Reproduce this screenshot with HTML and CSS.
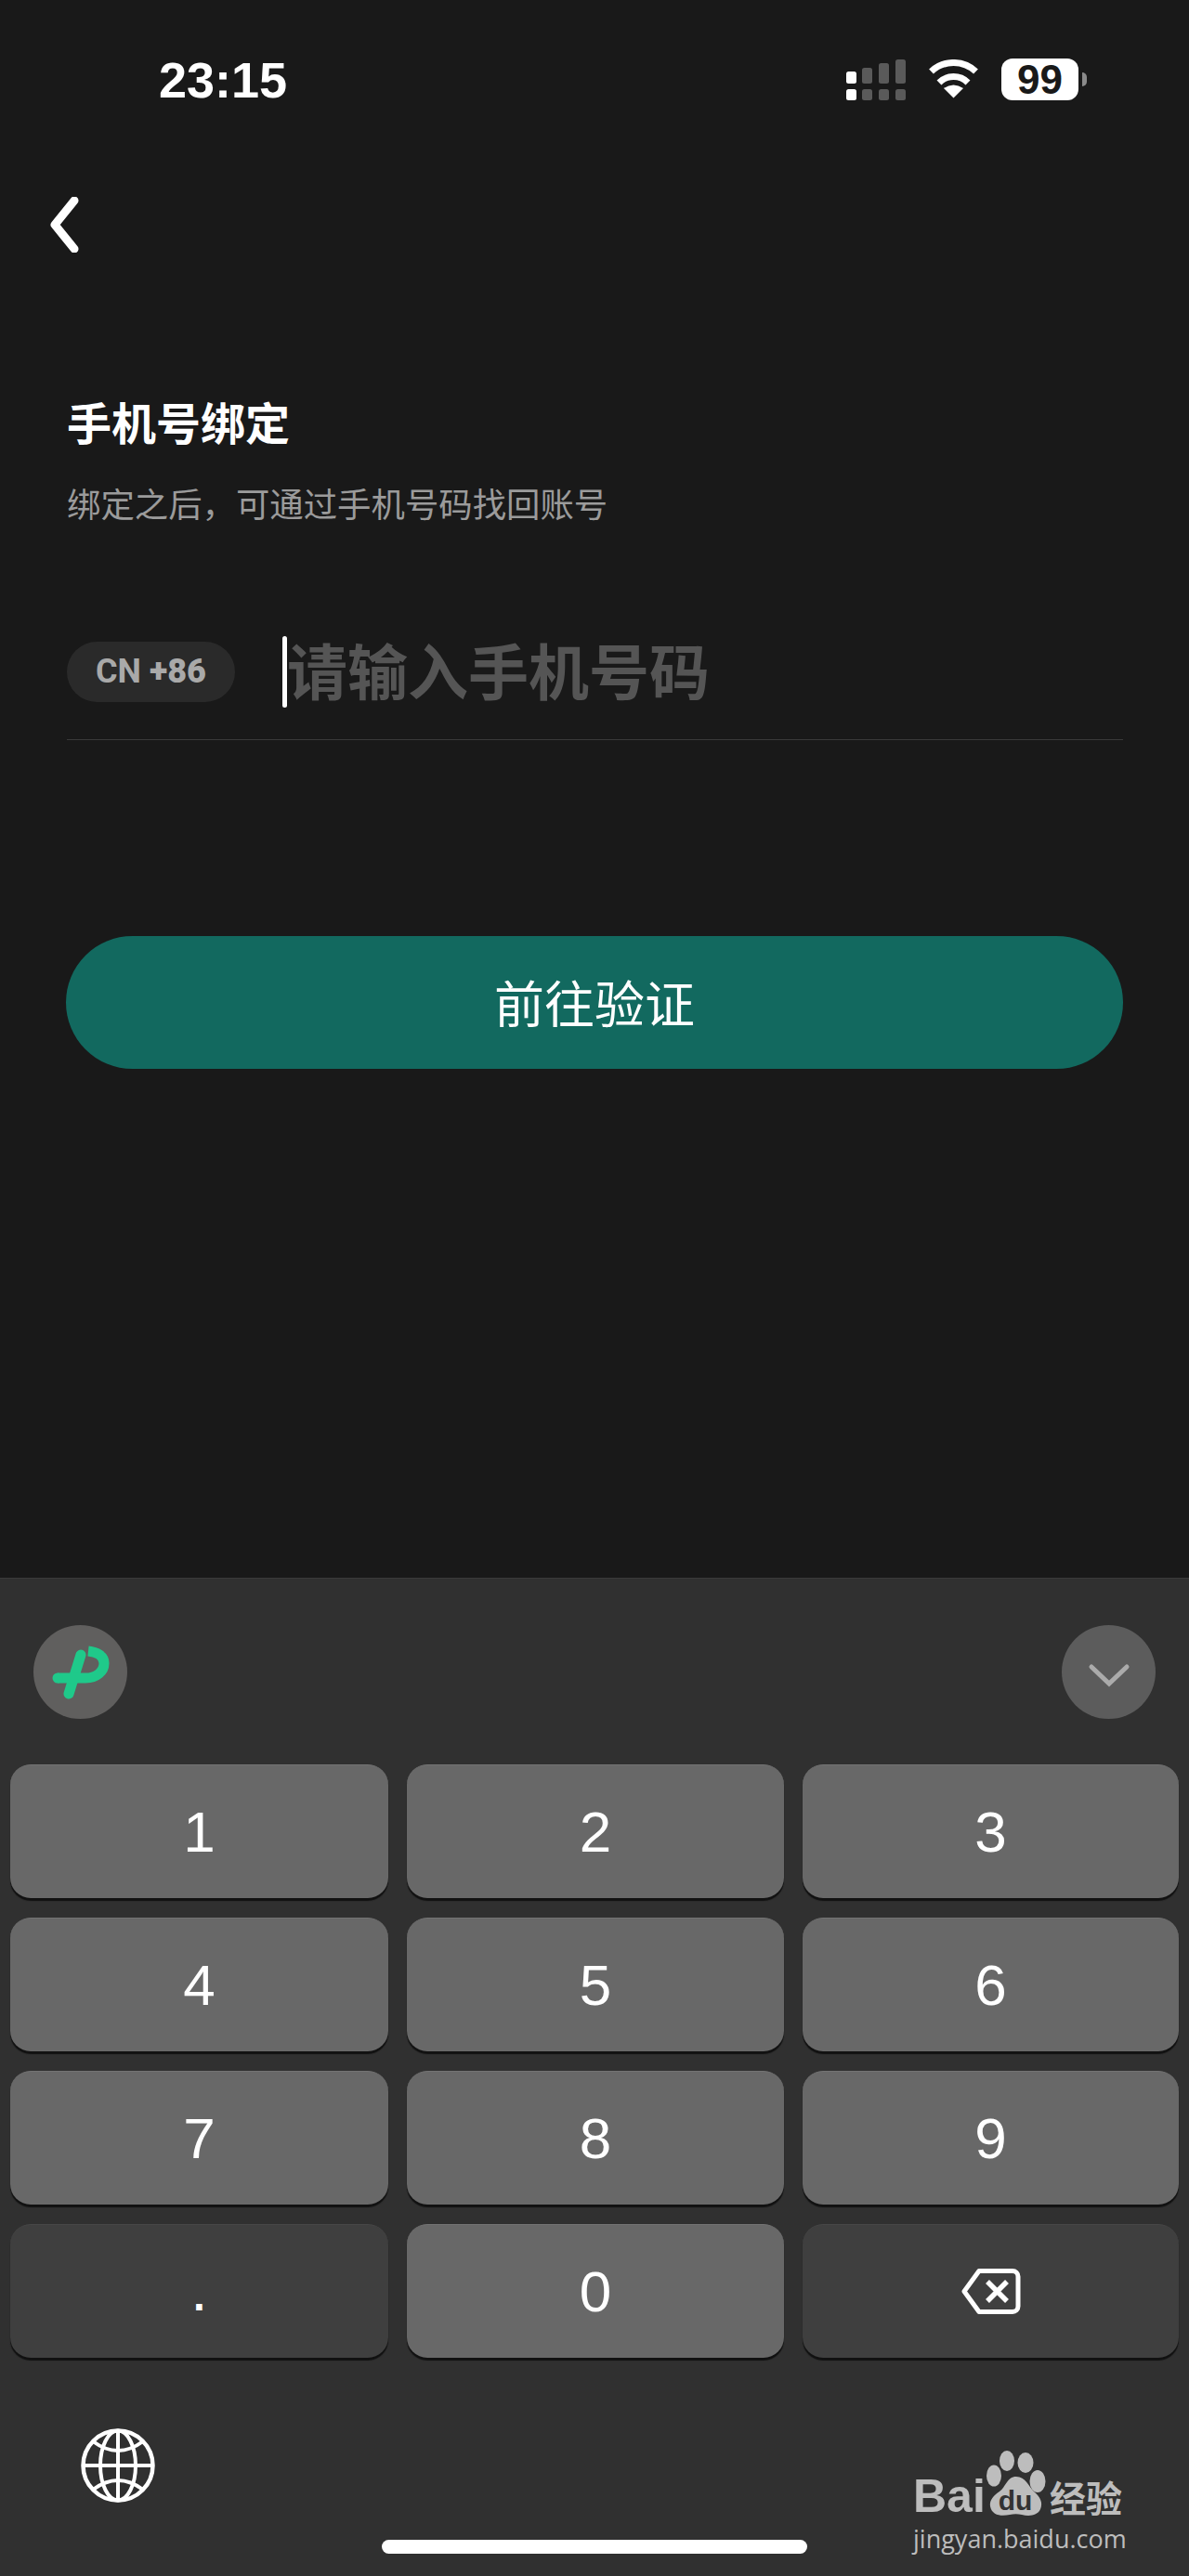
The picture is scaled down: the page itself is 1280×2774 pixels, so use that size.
FILE: index.html
```html
<!DOCTYPE html>
<html lang="zh-CN">
<head>
  <meta charset="UTF-8" />
  <meta name="viewport" content="width=device-width, initial-scale=1.0"/>
  <title>手机号绑定</title>
  <link rel="stylesheet" href="styles.css">
</head>

<body>
  <div class="page">
    <header class="status-bar">
      <span class="clock">23:15</span>
      <div class="status-icons">
        <svg class="signal" width="64" height="44" viewBox="0 0 64 44">
          <rect x="0" y="13" width="11" height="13" rx="2.5" fill="#fff"/>
          <rect x="0" y="32" width="11" height="12" rx="2.5" fill="#fff"/>
          <g fill="#5a5a5a">
            <rect x="17" y="9" width="11" height="17" rx="2.5"/>
            <rect x="17" y="32" width="11" height="12" rx="2.5"/>
            <rect x="35" y="4" width="11" height="22" rx="2.5"/>
            <rect x="35" y="32" width="11" height="12" rx="2.5"/>
            <rect x="53" y="0" width="11" height="26" rx="2.5"/>
            <rect x="53" y="32" width="11" height="12" rx="2.5"/>
          </g>
        </svg>
        <svg class="wifi" width="57" height="42" viewBox="0 0 57 42">
          <path d="M4.5 13 A35 35 0 0 1 52.5 13" fill="none" stroke="#fff" stroke-width="7"/>
          <path d="M13 25 A22 22 0 0 1 44 25" fill="none" stroke="#fff" stroke-width="7"/>
          <path d="M18 31 Q28.5 24 39 31 L28.5 41.5 Z" fill="#fff"/>
        </svg>
        <div class="battery">99</div>
      </div>
    </header>

    <div class="back-row">
      <svg width="32" height="60" viewBox="0 0 32 60">
        <path d="M27 4 L6 30 L27 56" fill="none" stroke="#fff" stroke-width="9" stroke-linecap="round" stroke-linejoin="round"/>
      </svg>
    </div>

    <main class="bind-form">
      <h1>手机号绑定</h1>
      <p class="hint">绑定之后，可通过手机号码找回账号</p>
      <div class="phone-row">
        <span class="country">CN <b>+86</b></span>
        <span class="cursor"></span>
        <span class="placeholder">请输入手机号码</span>
      </div>
      <div class="verify-btn">前往验证</div>
    </main>

    <section class="keyboard">
      <div class="toolbar">
        <div class="round-btn logo-btn">
          <svg width="101" height="101" viewBox="0 0 101 101">
            <path d="M51 32 L38 74" fill="none" stroke="#1fc98a" stroke-width="11" stroke-linecap="round"/>
            <path d="M26 57 H56 C68 57 76 50 76 41 C76 33 68 29 59 28" fill="none" stroke="#1fc98a" stroke-width="11" stroke-linecap="butt"/>
            <circle cx="26" cy="57" r="5.5" fill="#1fc98a"/>
          </svg>
        </div>
        <div class="round-btn hide-btn">
          <svg width="101" height="101" viewBox="0 0 101 101">
            <path d="M32 45 L51 63 L70 45" fill="none" stroke="#ababab" stroke-width="5" stroke-linecap="round"/>
          </svg>
        </div>
      </div>

      <div class="keys">
        <div class="key">1</div>
        <div class="key">2</div>
        <div class="key">3</div>
        <div class="key">4</div>
        <div class="key">5</div>
        <div class="key">6</div>
        <div class="key">7</div>
        <div class="key">8</div>
        <div class="key">9</div>
        <div class="key dark dot-key"><span class="dot">.</span></div>
        <div class="key">0</div>
        <div class="key dark">
          <svg width="64" height="49" viewBox="0 0 64 49">
            <path d="M19 2.5 H55 A6 6 0 0 1 61 8.5 V40.5 A6 6 0 0 1 55 46.5 H19 L3 24.5 Z" fill="none" stroke="#fff" stroke-width="5" stroke-linejoin="round"/>
            <path d="M28 14 L49 35 M49 14 L28 35" fill="none" stroke="#fff" stroke-width="5.5"/>
          </svg>
        </div>
      </div>

      <div class="globe-row">
        <svg width="80" height="80" viewBox="0 0 80 80" fill="none" stroke="#fff" stroke-width="4">
          <circle cx="40" cy="40" r="37.5" stroke-width="4.5"/>
          <ellipse cx="40" cy="40" rx="19" ry="37.5"/>
          <path d="M40 2.5 V77.5 M2.5 40 H77.5"/>
          <path d="M13 14 Q40 34 67 14 M13 66 Q40 46 67 66"/>
        </svg>
      </div>

      <div class="home-bar"></div>

      <div class="watermark">
        <div class="wm-logo">
          <span class="wm-bai">Bai</span>
          <svg class="wm-paw" width="68" height="74" viewBox="0 0 68 74">
            <g fill="#bdbdbd">
              <ellipse cx="24" cy="13" rx="8" ry="11"/>
              <ellipse cx="44" cy="15" rx="8.5" ry="11"/>
              <ellipse cx="10" cy="29" rx="8" ry="11.5"/>
              <ellipse cx="57" cy="35" rx="8.5" ry="12"/>
              <path d="M34 30 C44 30 47 40 53 46 C60 52 63 58 60 65 C57 72 48 73 40 71 C36 70 31 70 27 71 C18 73 8 72 6 62 C5 55 10 50 16 46 C23 41 24 30 34 30 Z"/>
            </g>
            <text class="wm-du" x="33" y="66" text-anchor="middle">du</text>
          </svg>
          <span class="wm-jy">经验</span>
        </div>
        <div class="wm-url">jingyan.baidu.com</div>
      </div>
    </section>
  </div>
</body>
</html>
```

FILE: styles.css
```css
* {
  margin: 0;
  padding: 0;
  box-sizing: border-box;
}

body {
  font-family: "Liberation Sans", "Noto Sans CJK SC", sans-serif;
  background: #191919;
  color: white;
}

.page {
  width: 1280px;
  height: 2774px;
  display: flex;
  flex-direction: column;
  overflow: hidden;
}

/* status bar */
.status-bar {
  height: 212px;
  padding: 64px 110px 0 171px;
  display: flex;
  justify-content: space-between;
  align-items: flex-start;
}
.clock {
  font-size: 54px;
  line-height: 44px;
  font-weight: 600;
}
.status-icons {
  display: flex;
  align-items: flex-start;
  gap: 23px;
}
.battery {
  position: relative;
  width: 83px;
  height: 45px;
  margin-top: -1px;
  margin-right: 9px;
  border-radius: 12px;
  background: white;
  color: #191919;
  font-size: 44px;
  line-height: 45px;
  font-weight: 700;
  text-align: center;
}
.battery::after {
  content: "";
  position: absolute;
  top: 15px;
  right: -9px;
  width: 5px;
  height: 15px;
  border-radius: 0 5px 5px 0;
  background: #8a8a8a;
}

.back-row {
  height: 60px;
  padding-left: 53px;
}

/* title and phone input */
.bind-form {
  padding: 151px 71px 0 72px;
  font-family: "Noto Sans CJK SC", "Liberation Sans", sans-serif;
}
.bind-form h1 {
  font-size: 48px;
  line-height: 60px;
  font-weight: 700;
}
.hint {
  margin-top: 36px;
  font-size: 36.4px;
  line-height: 44px;
  color: #9b9b9b;
}
.phone-row {
  margin-top: 122px;
  padding-bottom: 34px;
  border-bottom: 1px solid #3a3a3a;
  display: flex;
  align-items: center;
  height: 112px;
}
.country {
  width: 181px;
  height: 65px;
  margin-right: 51px;
  border-radius: 33px;
  background: #2a2a2a;
  color: #a9a9a9;
  font-family: Roboto, "Liberation Sans", sans-serif;
  font-size: 36px;
  line-height: 65px;
  font-weight: 700;
  text-align: center;
}
.country b {
  font-weight: 900;
}
.cursor {
  width: 5px;
  height: 77px;
  border-radius: 3px;
  background: white;
}
.placeholder {
  font-size: 65px;
  line-height: 71px;
  height: 77px;
  font-weight: 700;
  color: #555555;
}
.verify-btn {
  height: 143px;
  margin-top: 211px;
  margin-left: -1px;
  border-radius: 72px;
  background: #12695f;
  font-size: 54px;
  line-height: 141px;
  text-align: center;
}

/* keyboard */
.keyboard {
  position: relative;
  margin-top: auto;
  height: 1075px;
  background: #303030;
  border-top: 1px solid #3a3a3a;
}
.toolbar {
  padding: 50px 36px 0 36px;
  display: flex;
  justify-content: space-between;
}
.round-btn {
  width: 101px;
  height: 101px;
  border-radius: 50%;
}
.logo-btn {
  background: #605f5e;
}
.hide-btn {
  background: #5c5c5c;
}
.keys {
  margin-top: 49px;
  padding-left: 11px;
  display: grid;
  grid-template-columns: 407px 406px 405px;
  grid-auto-rows: 144px;
  column-gap: 20px;
  row-gap: 21px;
}
.key {
  border-radius: 22px;
  background: #686868;
  border-top: 1px solid #737373;
  box-shadow: 0 3px 1px #111111;
  font-size: 62px;
  display: flex;
  align-items: center;
  justify-content: center;
}
.key.dark {
  background: #3f3f3f;
  border-top-color: #474747;
}
.dot {
  font-size: 46px;
  line-height: 46px;
  font-weight: 700;
  margin-top: 8px;
}
.globe-row {
  margin-top: 76px;
  padding-left: 87px;
  height: 80px;
}
.home-bar {
  width: 458px;
  height: 15px;
  margin: 40px auto 0 411px;
  border-radius: 8px;
  background: white;
}

/* watermark in the corner */
.watermark {
  position: absolute;
  top: 937px;
  left: 983px;
  width: 228px;
  color: #bdbdbd;
}
.wm-logo {
  height: 74px;
  display: flex;
  align-items: flex-end;
}
.wm-bai {
  font-size: 50px;
  line-height: 46px;
  font-weight: 700;
  width: 77px;
}
.wm-paw {
  flex: none;
}
.wm-du {
  font-family: "Liberation Sans", sans-serif;
  font-size: 30px;
  font-weight: 700;
  fill: #333333;
}
.wm-jy {
  margin-left: 2px;
  font-family: "Noto Sans CJK SC", sans-serif;
  font-size: 39px;
  line-height: 46px;
  font-weight: 700;
  white-space: nowrap;
}
.wm-url {
  margin-top: 5px;
  font-family: "Open Sans", sans-serif;
  font-size: 27px;
  line-height: 36px;
  white-space: nowrap;
}
```
